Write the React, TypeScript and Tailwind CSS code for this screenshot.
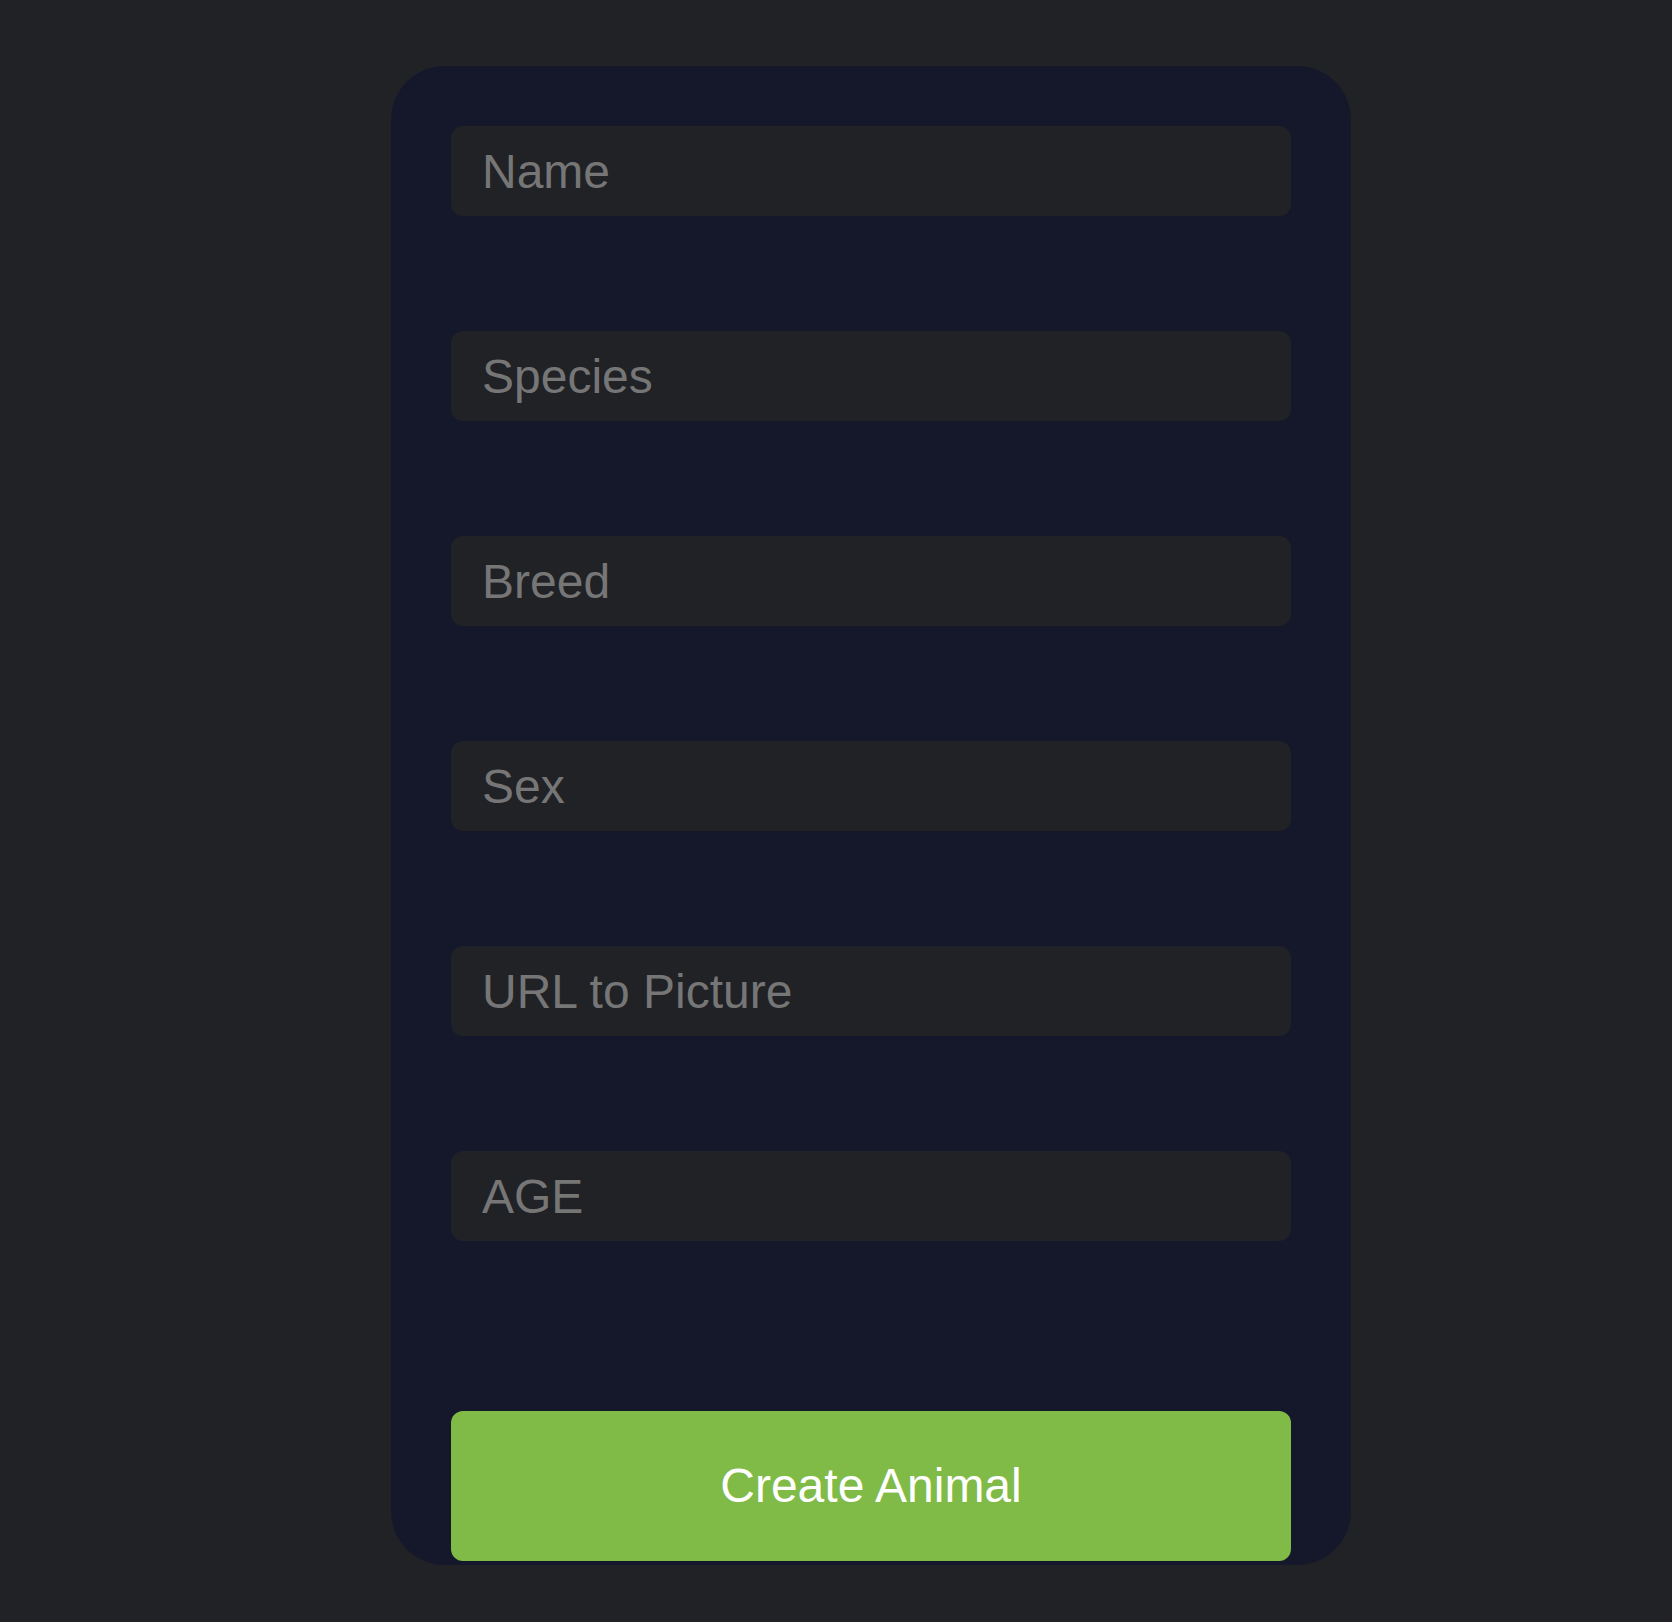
import React from 'react';

const fields = ['Name', 'Species', 'Breed', 'Sex', 'URL to Picture', 'AGE'];

export default function App() {
  return (
    <div className="min-h-screen bg-[#202226] pt-[66px] pb-[57px] pl-[391px] flex" style={{ fontFamily: '"Liberation Sans", Arial, sans-serif' }}>
      <form
        onSubmit={(e) => e.preventDefault()}
        className="w-[960px] h-[1499px] bg-[#15182b] rounded-[54px] px-[60px] pt-[60px] pb-[4px] flex flex-col"
      >
        <div className="flex flex-col gap-[115px]">
          {fields.map((f) => (
            <input
              key={f}
              type="text"
              placeholder={f}
              className="w-full h-[90px] rounded-[12px] bg-[#202226] pl-[31px] pr-[32px] text-[48px] text-[#d0d0d0] placeholder:text-[#767676] outline-none border-0"
            />
          ))}
        </div>
        <button
          type="submit"
          className="mt-[170px] w-full h-[150px] rounded-[12px] bg-[#7fbb46] text-white text-[48px]"
        >
          Create Animal
        </button>
      </form>
    </div>
  );
}
